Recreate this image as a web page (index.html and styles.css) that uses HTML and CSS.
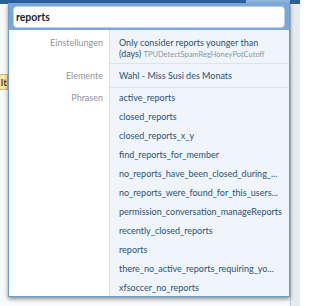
FILE: index.html
```html
<!DOCTYPE html>
<html lang="de">
<head>
<meta charset="utf-8">
<title>Suche</title>
<link rel="stylesheet" href="styles.css">
</head>
<body>
<div class="page">
  <div class="nav"><span class="nav-tab"></span></div>
  <div class="backdrop">
    <div class="notice">lt</div>
  </div>
  <div class="scroll-edge"></div>

  <div class="popup">
    <div class="head">
      <div class="search">reports</div>
    </div>
    <div class="results">
      <div class="group g-settings">
        <div class="label">Einstellungen</div>
        <div class="items">
          <div class="item two-line">Only consider reports younger than<br>(days) <span class="key">TPUDetectSpamRegHoneyPotCutoff</span></div>
        </div>
      </div>
      <div class="group g-elements">
        <div class="label">Elemente</div>
        <div class="items">
          <div class="item">Wahl - Miss Susi des Monats</div>
        </div>
      </div>
      <div class="group g-phrases">
        <div class="label">Phrasen</div>
        <div class="items">
          <div class="item">active_reports</div>
          <div class="item">closed_reports</div>
          <div class="item">closed_reports_x_y</div>
          <div class="item">find_reports_for_member</div>
          <div class="item">no_reports_have_been_closed_during_...</div>
          <div class="item">no_reports_were_found_for_this_users...</div>
          <div class="item">permission_conversation_manageReports</div>
          <div class="item">recently_closed_reports</div>
          <div class="item">reports</div>
          <div class="item">there_no_active_reports_requiring_yo...</div>
          <div class="item">xfsoccer_no_reports</div>
        </div>
      </div>
    </div>
  </div>
</div>
</body>
</html>
```

FILE: styles.css
```css
html, body {
  margin: 0;
  padding: 0;
}

body {
  background: #ffffff;
  font-family: Lato, "Open Sans", "DejaVu Sans", sans-serif;
}

.page {
  position: relative;
  width: 300px;
  height: 306px;
  overflow: hidden;
  background: #f7f9fb;
}

.nav {
  height: 4px;
  background: #2c609a;
  display: flex;
  justify-content: flex-end;
  padding-right: 10px;
}

.nav-tab {
  width: 44px;
  background: #8fb6df;
}

.backdrop {
  padding-top: 70px;
}

.notice {
  width: 8px;
  height: 16px;
  box-sizing: border-box;
  background: #fbe4ae;
  border: 1px solid #dcb36a;
  border-left: none;
  color: #5a3d10;
  font-weight: bold;
  font-size: 10px;
  line-height: 14px;
  overflow: hidden;
  text-align: right;
}

.scroll-edge {
  position: absolute;
  top: 4px;
  right: 0;
  bottom: 0;
  width: 9px;
  background: #e6ebf0;
  border-left: 1px solid #c3ccd5;
}

.popup {
  position: absolute;
  left: 8px;
  top: 3px;
  width: 282px;
  height: 294px;
  box-sizing: border-box;
  border: 1px solid #6f9bcc;
  border-top: none;
  background: #ffffff;
  box-shadow: 0 2px 4px rgba(0, 0, 0, 0.45);
  display: flex;
  flex-direction: column;
  overflow: hidden;
}

.head {
  background: #79a7da;
  padding: 3px 4px 2px 4px;
}

.search {
  height: 22px;
  box-sizing: border-box;
  background: #ffffff;
  border: 1px solid #b9d2ec;
  border-radius: 4px;
  padding: 0 2px;
  font-size: 10.5px;
  font-weight: bold;
  line-height: 20px;
  color: #1f1f1f;
}

.results {
  flex: 1;
  display: flex;
  flex-direction: column;
  background: linear-gradient(to right, #ffffff 100px, #d6e2ee 100px, #d6e2ee 101px, #eff5fb 101px);
}

.group {
  display: grid;
  grid-template-columns: 100px 1fr;
}

.label {
  text-align: right;
  padding-right: 6px;
  font-size: 9px;
  color: #959595;
  line-height: 13px;
}

.items {
  border-left: 1px solid #d6e2ee;
  background: #eff5fb;
  min-width: 0;
}

.item {
  padding: 3px 4px 3px 9px;
  font-size: 9px;
  line-height: 13px;
  color: #2b5279;
  white-space: nowrap;
}

.g-settings .label {
  padding-top: 6px;
}

.g-settings .items {
  border-bottom: 1px solid #d9e4ef;
}

.g-settings .item {
  padding-top: 7px;
  padding-bottom: 4px;
  line-height: 11px;
  height: 22px;
}

.key {
  font-size: 7.5px;
  color: #8d98a3;
}

.g-elements .label {
  padding-top: 5px;
}

.g-elements .items {
  border-bottom: 1px solid #d9e4ef;
}

.g-elements .item {
  padding-top: 5px;
  padding-bottom: 5px;
}

.g-phrases .label {
  padding-top: 3px;
}
```
